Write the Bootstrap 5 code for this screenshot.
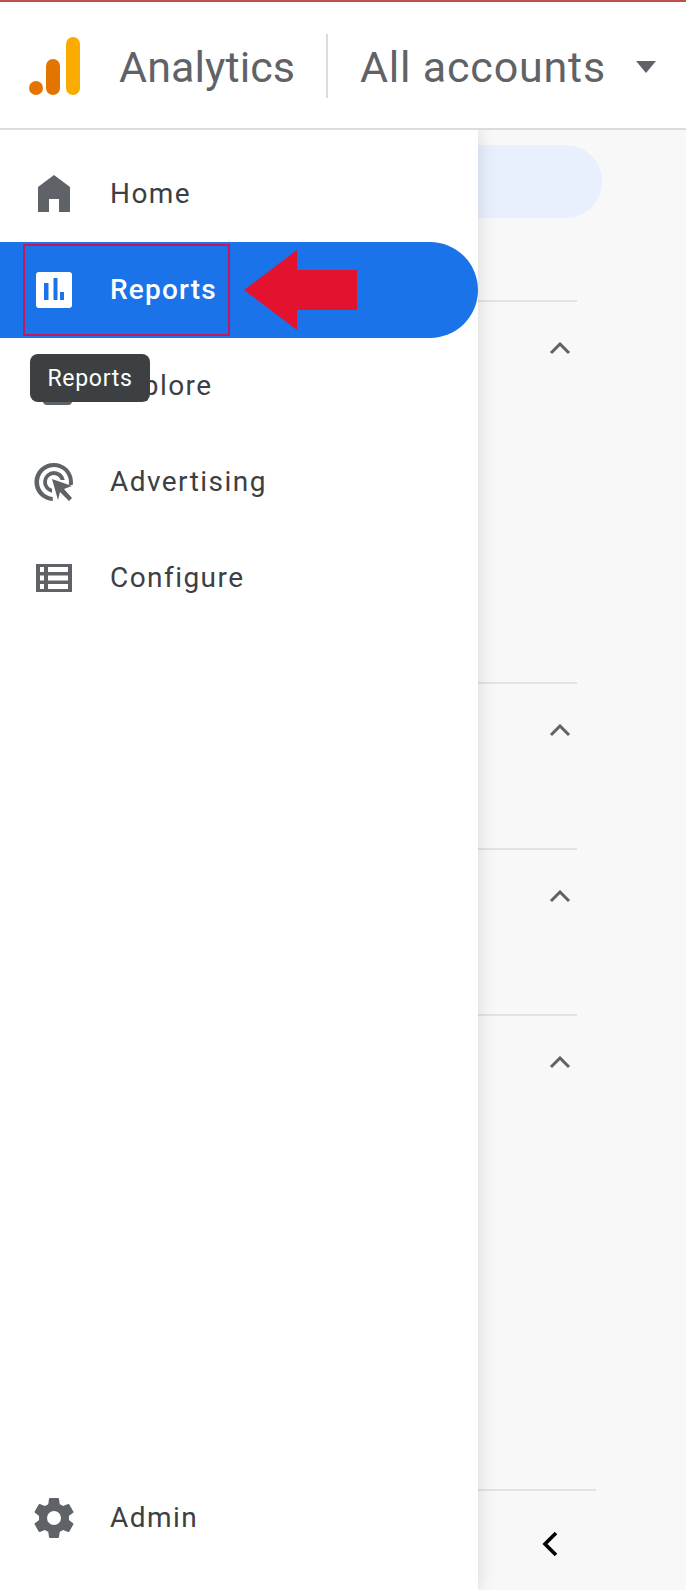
<!DOCTYPE html>
<html lang="en">
<head>
    <meta charset="UTF-8">
    <meta name="viewport" content="width=device-width, initial-scale=1.0">
    <title>Analytics</title>
    <link rel="stylesheet" href="https://cdn.jsdelivr.net/npm/bootstrap@5.3.0/dist/css/bootstrap.min.css">
    <style>
        body { height: 1590px; overflow: hidden; font-family: Roboto, "Liberation Sans", sans-serif; color: #3c4043; background: #fff; }
        .app-shell { height: 1590px; border-top: 2px solid #c0504d; }
        .top-head { height: 128px; border-bottom: 2px solid #dadce0; padding: 4px 0 0 29px; }
        .ga-logo { width: 52px; height: 58px; margin-top: -2px; }
        .head-title { font-size: 43px; font-weight: 400; color: #5f6368; letter-spacing: .8px; line-height: 1; }
        .head-title-main { margin-left: 38px; width: 182px; letter-spacing: .1px; }
        .head-split { width: 2px; height: 64px; background: #dadce0; margin: -2px 32px 0 25px; }
        .head-caret { width: 0; height: 0; margin-left: 30px; border-left: 10px solid transparent; border-right: 10px solid transparent; border-top: 12px solid #5f6368; }
        .work-area { height: 1460px; overflow: hidden; }
        .side-menu { width: 478px; padding: 16px 0 24px; background: #fff; box-shadow: 0 0 18px rgba(0, 0, 0, .14); z-index: 2; }
        .menu-row { height: 96px; font-size: 28px; letter-spacing: 1.45px; color: #3c4043; text-decoration: none; }
        .menu-row svg { width: 44px; height: 44px; margin: 0 34px 0 32px; fill: #5f6368; flex: none; }
        .menu-row.active-row { background: #1a73e8; color: #fff; border-radius: 0 48px 48px 0; font-weight: 500; letter-spacing: 1.2px; }
        .menu-row.active-row svg { fill: #fff; }
        .red-frame { left: 23px; top: 2px; width: 207px; height: 92px; border: 2px solid #c2185b; }
        .red-arrow { left: 244px; top: 8px; width: 113px; height: 80px; fill: #e3122f; }
        .menu-tip { left: 30px; top: 112px; width: 120px; height: 48px; padding-top: 2px; background: #3c4043; color: #fff; border-radius: 8px; font-size: 23px; letter-spacing: .7px; z-index: 3; }
        .right-pane { background: #f8f8f8; }
        .search-pill { width: 124px; height: 73px; margin-top: 15px; background: #e8f0fe; border-radius: 0 36px 36px 0; }
        .pane-group { width: 99px; border-top: 2px solid #e3e3e3; padding: 40px 6px 0 0; }
        .first-group { margin-top: 82px; height: 382px; }
        .short-group { height: 166px; }
        .up-mark { width: 22px; height: 13px; fill: none; stroke: #5f6368; stroke-width: 3; }
        .pane-foot { width: 118px; height: 101px; border-top: 2px solid #e3e3e3; padding: 40px 0 0 64px; }
        .back-mark { width: 16px; height: 26px; fill: none; stroke: #000; stroke-width: 3.6; display: block; }
    </style>
</head>
<body>
<div class="app-shell d-flex flex-column">

    <!-- Top header -->
    <header class="top-head d-flex align-items-center">
        <svg class="ga-logo flex-none" viewBox="0 0 52 58">
            <circle cx="7" cy="51" r="7" fill="#e37400"/>
            <rect x="17" y="22" width="14" height="36" rx="7" fill="#e37400"/>
            <rect x="37" y="0" width="14" height="58" rx="7" fill="#f9ab00"/>
        </svg>
        <span class="head-title head-title-main">Analytics</span>
        <span class="head-split"></span>
        <span class="head-title">All accounts</span>
        <span class="head-caret"></span>
    </header>

    <div class="work-area d-flex">
        <!-- Side menu -->
        <nav class="side-menu d-flex flex-column">
            <a class="menu-row d-flex align-items-center" href="#">
                <svg viewBox="0 0 44 44"><path d="M6 40V15L22 3l16 12v25H27V27H17v13z"/></svg>
                Home
            </a>
            <div class="position-relative">
                <a class="menu-row active-row d-flex align-items-center" href="#">
                    <svg viewBox="0 0 44 44"><path fill-rule="evenodd" d="M7 4h30a3 3 0 0 1 3 3v30a3 3 0 0 1-3 3H7a3 3 0 0 1-3-3V7a3 3 0 0 1 3-3zm5 11v17h4.500V15zm9.500-5v22h4V10zM28 24v8h4v-8z"/></svg>
                    Reports
                </a>
                <div class="red-frame position-absolute"></div>
                <svg class="red-arrow position-absolute" viewBox="0 0 113 80"><path d="M0 40 53 0v20h60v40H53v20z"/></svg>
                <div class="menu-tip position-absolute d-flex align-items-center justify-content-center">Reports</div>
            </div>
            <a class="menu-row d-flex align-items-center" href="#">
                <svg viewBox="0 0 44 44"><path d="M8 6h28a4 4 0 0 1 4 4v27a4 4 0 0 1-4 4H15a4 4 0 0 1-4-3H8a4 4 0 0 1-4-4V10a4 4 0 0 1 4-4z"/></svg>
                Explore
            </a>
            <a class="menu-row d-flex align-items-center" href="#">
                <svg viewBox="0 0 44 44">
                    <path d="M22 3a19 19 0 0 1 19 19c0 1-.1 2-.3 3h-4a15 15 0 1 0-15.900 12v4A19 19 0 0 1 22 3z"/>
                    <path d="M22 11a11 11 0 0 1 10.800 9h-4.200a7 7 0 1 0-8.600 8.700v4.100A11 11 0 0 1 22 11z"/>
                    <path d="M20 19l20 7-8 3 8 9-3 3-9-9-2 8z"/>
                </svg>
                Advertising
            </a>
            <a class="menu-row d-flex align-items-center" href="#">
                <svg viewBox="0 0 44 44"><path fill-rule="evenodd" d="M4 8h36v28H4zm4 3v5h4v-5zm8 0v5h20v-5zM8 19.500v5h4v-5zm8 0v5h20v-5zM8 28v5h4v-5zm8 0v5h20v-5z"/></svg>
                Configure
            </a>
            <a class="menu-row d-flex align-items-center mt-auto" href="#">
                <svg viewBox="1 1 22 22"><path d="M19.430 12.980c.04-.32.07-.64.07-.98s-.03-.66-.07-.98l2.110-1.650c.19-.15.24-.42.12-.64l-2-3.460c-.12-.22-.39-.3-.61-.22l-2.490 1c-.52-.4-1.080-.73-1.690-.98l-.38-2.650A.49.49 0 0 0 14 2h-4c-.25 0-.46.18-.49.42l-.38 2.650c-.61.25-1.170.59-1.690.98l-2.490-1c-.23-.09-.49 0-.61.22l-2 3.460c-.13.22-.07.49.12.64l2.110 1.650c-.04.32-.07.65-.07.98s.03.66.07.98l-2.110 1.650c-.19.15-.24.42-.12.64l2 3.460c.12.22.39.3.61.22l2.490-1c.52.4 1.080.73 1.690.98l.38 2.650c.03.24.24.42.49.42h4c.25 0 .46-.18.49-.42l.38-2.650c.61-.25 1.170-.59 1.690-.98l2.490 1c.23.09.49 0 .61-.22l2-3.460c.12-.22.07-.49-.12-.64zM12 15.500a3.500 3.500 0 1 1 0-7 3.500 3.500 0 0 1 0 7z"/></svg>
                Admin
            </a>
        </nav>

        <!-- Content behind the menu -->
        <main class="right-pane flex-grow-1 d-flex flex-column">
            <div class="search-pill"></div>
            <div class="pane-group first-group d-flex justify-content-end align-items-start">
                <svg class="up-mark" viewBox="0 0 22 13"><path d="M2 11l9-9 9 9"/></svg>
            </div>
            <div class="pane-group short-group d-flex justify-content-end align-items-start">
                <svg class="up-mark" viewBox="0 0 22 13"><path d="M2 11l9-9 9 9"/></svg>
            </div>
            <div class="pane-group short-group d-flex justify-content-end align-items-start">
                <svg class="up-mark" viewBox="0 0 22 13"><path d="M2 11l9-9 9 9"/></svg>
            </div>
            <div class="pane-group short-group d-flex justify-content-end align-items-start">
                <svg class="up-mark" viewBox="0 0 22 13"><path d="M2 11l9-9 9 9"/></svg>
            </div>
            <div class="pane-foot mt-auto">
                <svg class="back-mark" viewBox="0 0 16 26"><path d="M14 2 3 13l11 11"/></svg>
            </div>
        </main>
    </div>
</div>
<script src="https://cdn.jsdelivr.net/npm/bootstrap@5.3.0/dist/js/bootstrap.bundle.min.js"></script>
</body>
</html>
